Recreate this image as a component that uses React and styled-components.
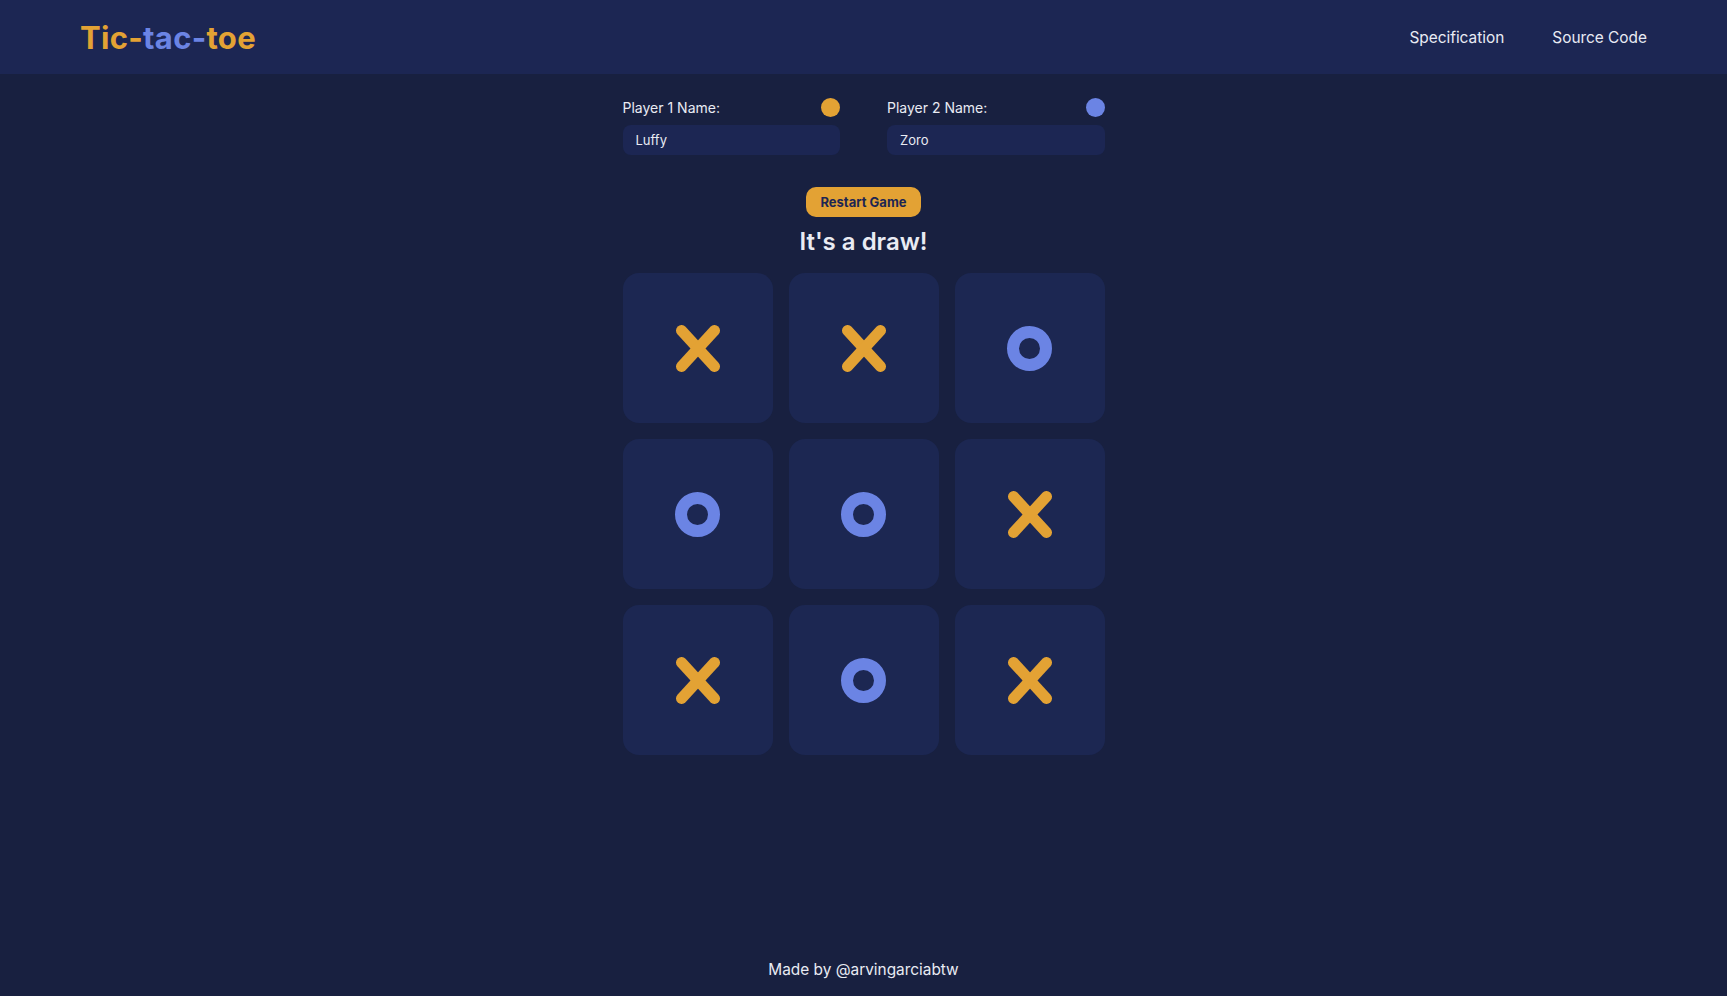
import styled, { createGlobalStyle } from "styled-components";

const ORANGE = "#e3a234";
const BLUE = "#6b84e4";

const GlobalStyle = createGlobalStyle`
  html, body {
    margin: 0;
    padding: 0;
    background: #182040;
    color: #e9ebf3;
    font-family: Inter, "Noto Sans", sans-serif;
  }
  * { box-sizing: border-box; }
`;

const Page = styled.div`
  min-height: 100vh;
  display: flex;
  flex-direction: column;
`;

const Header = styled.header`
  height: 74px;
  background: #1c2653;
  display: flex;
  align-items: center;
  justify-content: space-between;
  padding: 0 80px 0 80px;
`;

const Logo = styled.h1`
  margin: 0;
  font-size: 31px;
  font-weight: 700;
  letter-spacing: 0.3px;
`;

const LogoPart = styled.span`
  color: ${(p) => p.color};
`;

const Nav = styled.nav`
  display: flex;
  gap: 48px;
`;

const NavLink = styled.a`
  color: #e9ebf3;
  font-size: 15.4px;
  text-decoration: none;
`;

const Main = styled.main`
  flex: 1;
  display: flex;
  flex-direction: column;
  align-items: center;
  padding-top: 24px;
`;

const Players = styled.div`
  width: 482px;
  display: grid;
  grid-template-columns: minmax(0, 1fr) minmax(0, 1fr);
  gap: 47px;
`;

const Player = styled.div`
  display: flex;
  flex-direction: column;
  gap: 8px;
  min-width: 0;
`;

const LabelRow = styled.div`
  display: flex;
  align-items: center;
  justify-content: space-between;
  height: 19px;
`;

const Label = styled.label`
  font-size: 14px;
`;

const Dot = styled.span`
  width: 19px;
  height: 19px;
  border-radius: 50%;
  background: ${(p) => p.color};
`;

const NameInput = styled.input`
  width: 100%;
  min-width: 0;
  height: 30px;
  border: none;
  border-radius: 8px;
  background: #1c2653;
  color: #e9ebf3;
  font-family: inherit;
  font-size: 13px;
  padding: 0 13px;
  outline: none;
`;

const RestartButton = styled.button`
  margin-top: 32px;
  height: 30px;
  width: 115px;
  border: none;
  border-radius: 10px;
  background: ${ORANGE};
  color: #1c2653;
  font-family: inherit;
  font-size: 13px;
  font-weight: 700;
  cursor: pointer;
`;

const Status = styled.h2`
  margin: 10px 0 0;
  height: 30px;
  line-height: 30px;
  font-size: 24px;
  font-weight: 600;
`;

const Board = styled.div`
  margin-top: 16px;
  display: grid;
  grid-template-columns: repeat(3, 150px);
  grid-auto-rows: 150px;
  gap: 16px;
`;

const Cell = styled.button`
  border: none;
  border-radius: 16px;
  background: #1c2752;
  display: flex;
  align-items: center;
  justify-content: center;
  padding: 0;
  cursor: pointer;
`;

const Footer = styled.footer`
  text-align: center;
  font-size: 15.4px;
  padding: 16px 0 17px;
`;

const XMark = () => (
  <svg width="44" height="47" viewBox="0 0 44 47">
    <g stroke={ORANGE} strokeWidth="11" strokeLinecap="round">
      <line x1="5.5" y1="5.5" x2="38.5" y2="41.5" />
      <line x1="38.5" y1="5.5" x2="5.5" y2="41.5" />
    </g>
  </svg>
);

const OMark = () => (
  <svg width="45" height="45" viewBox="0 0 45 45">
    <circle cx="22.5" cy="22.5" r="16.5" fill="none" stroke={BLUE} strokeWidth="12" />
  </svg>
);

const board = ["X", "X", "O", "O", "O", "X", "X", "O", "X"];

export default function App() {
  return (
    <Page>
      <GlobalStyle />
      <Header>
        <Logo>
          <LogoPart color={ORANGE}>Tic-</LogoPart>
          <LogoPart color={BLUE}>tac-</LogoPart>
          <LogoPart color={ORANGE}>toe</LogoPart>
        </Logo>
        <Nav>
          <NavLink href="#">Specification</NavLink>
          <NavLink href="#">Source Code</NavLink>
        </Nav>
      </Header>
      <Main>
        <Players>
          <Player>
            <LabelRow>
              <Label>Player 1 Name:</Label>
              <Dot color={ORANGE} />
            </LabelRow>
            <NameInput defaultValue="Luffy" />
          </Player>
          <Player>
            <LabelRow>
              <Label>Player 2 Name:</Label>
              <Dot color={BLUE} />
            </LabelRow>
            <NameInput defaultValue="Zoro" />
          </Player>
        </Players>
        <RestartButton>Restart Game</RestartButton>
        <Status>It's a draw!</Status>
        <Board>
          {board.map((mark, i) => (
            <Cell key={i}>{mark === "X" ? <XMark /> : <OMark />}</Cell>
          ))}
        </Board>
      </Main>
      <Footer>Made by @arvingarciabtw</Footer>
    </Page>
  );
}
